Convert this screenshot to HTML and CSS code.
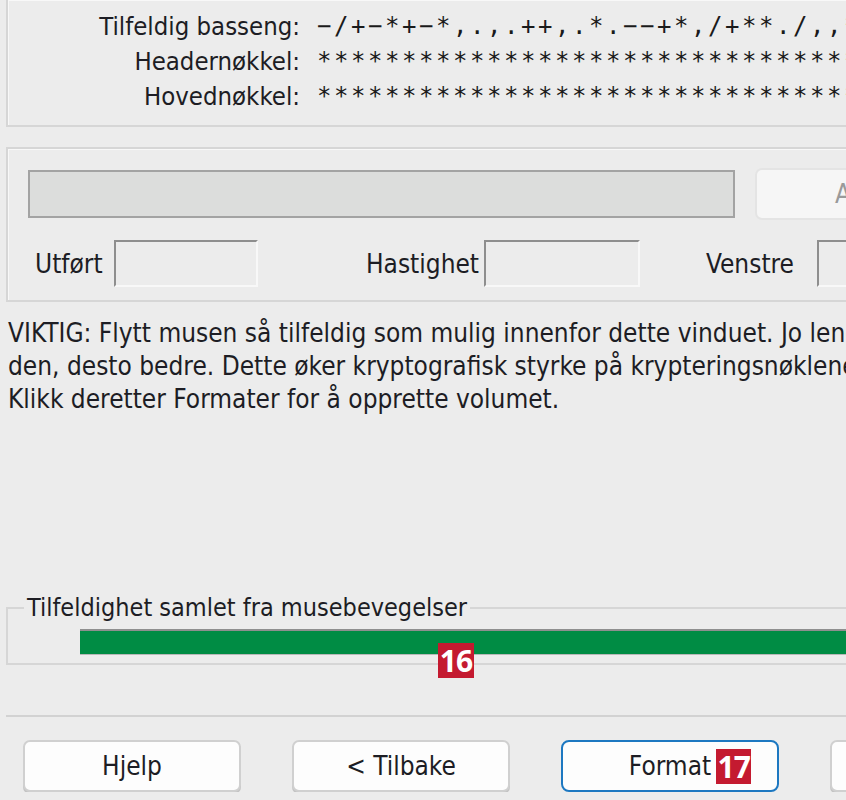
FILE: index.html
```html
<!DOCTYPE html>
<html lang="no">
<head>
<meta charset="utf-8">
<title>Volumformatering</title>
<link rel="stylesheet" href="styles.css">
</head>
<body>
<div class="page">
  <section class="panel keys">
    <div class="key-grid">
      <span class="lbl">Tilfeldig basseng:</span><span class="mono">−/+−*+−*,.,.++,.*.−−+*,/+**./,,*+.−</span>
      <span class="lbl">Headernøkkel:</span><span class="mono">****************************************</span>
      <span class="lbl">Hovednøkkel:</span><span class="mono">****************************************</span>
    </div>
  </section>

  <section class="panel progress">
    <div class="prog-row">
      <div class="prog-bar"></div>
      <div class="btn btn-disabled">Avbryt</div>
    </div>
    <div class="stat-row">
      <div class="stat s1"><span class="stat-lbl">Utført</span><span class="field"></span></div>
      <div class="stat s2"><span class="stat-lbl">Hastighet</span><span class="field"></span></div>
      <div class="stat s3"><span class="stat-lbl">Venstre</span><span class="field"></span></div>
    </div>
  </section>

  <p class="info">
    <span class="line">VIKTIG: Flytt musen så tilfeldig som mulig innenfor dette vinduet. Jo lengre du flytter</span>
    <span class="line">den, desto bedre. Dette øker kryptografisk styrke på krypteringsnøklene.</span>
    <span class="line">Klikk deretter Formater for å opprette volumet.</span>
  </p>

  <fieldset class="group">
    <legend>Tilfeldighet samlet fra musebevegelser</legend>
    <div class="entropy">
      <span class="badge badge-16">16</span>
    </div>
  </fieldset>

  <hr class="sep">

  <div class="buttons">
    <div class="btn">Hjelp</div>
    <div class="btn">&lt; Tilbake</div>
    <div class="btn btn-default">Format<span class="badge badge-17">17</span></div>
    <div class="btn">Avbryt</div>
  </div>
</div>
</body>
</html>
```
FILE: styles.css
```css
html, body {
  margin: 0;
  padding: 0;
  overflow: hidden;
  background: #ececec;
}
body {
  font-family: "DejaVu Sans Condensed", "DejaVu Sans", sans-serif;
  font-stretch: condensed;
  font-size: 26px;
  color: #1d1d24;
}
.page {
  width: 1100px;
  padding-left: 6px;
}
.panel {
  border: 2px solid #d6d6d6;
  box-shadow: inset 1px 1px 0 #f8f8f8;
}
.keys {
  border-top: 0;
  padding: 8px 0 12px;
}
.key-grid {
  display: grid;
  grid-template-columns: 292px auto;
  column-gap: 17px;
  grid-auto-rows: 35px;
  align-items: center;
}
.lbl {
  text-align: right;
  white-space: nowrap;
  font-size: 25.5px;
}
.mono {
  font-family: "DejaVu Sans Mono", monospace;
  font-size: 24px;
  letter-spacing: 2.55px;
  white-space: nowrap;
  color: #1a1a1a;
}
.progress {
  margin-top: 20px;
  padding: 19px 0 13px 20px;
}
.prog-row {
  display: flex;
  align-items: center;
  gap: 20px;
  height: 52px;
}
.prog-bar {
  width: 703px;
  height: 44px;
  background: #dcdddc;
  border: 2px solid #a3a3a3;
}
.btn {
  width: 218px;
  height: 52px;
  box-sizing: border-box;
  border: 2px solid #d0d0d0;
  border-radius: 7px;
  background: #fdfdfd;
  display: flex;
  align-items: center;
  justify-content: center;
  white-space: nowrap;
  box-shadow: 0 2px 0 #c4c4c4;
}
.btn-disabled {
  width: 236px;
  background: #f6f6f6;
  border-color: #e4e4e4;
  box-shadow: none;
  color: #9a9a9a;
}
.stat-row {
  display: flex;
  margin-top: 20px;
  height: 47px;
  align-items: center;
  padding-left: 7px;
}
.stat {
  display: flex;
  align-items: center;
  justify-content: space-between;
}
.s1 { width: 223px; }
.s2 { width: 274px; margin-left: 108px; }
.s3 { width: 311px; margin-left: 66px; }
.field {
  width: 140px;
  height: 43px;
  border: 2px solid;
  border-color: #8e8e8e #f8f8f8 #f8f8f8 #8e8e8e;
  background: #ececec;
}
.s2 .field { width: 152px; }
.s3 .field { width: 196px; }
.info {
  margin: 15px 0 0 2px;
  line-height: 33px;
}
.line {
  display: block;
  white-space: nowrap;
}
.group {
  margin: 179px 0 0 0;
  border: 2px solid #d6d6d6;
  padding: 8px 0 8px 0;
}
.group legend {
  padding: 0 3px;
  margin-left: 16px;
  line-height: 26px;
  font-size: 25px;
}
.entropy {
  position: relative;
  margin-left: 72px;
  height: 23px;
  border-top: 2px solid #8f8f8f;
  border-bottom: 1px solid #b8b8b8;
  background: #008c44;
}
.badge {
  background: #c41a30;
  color: #fff;
  font-family: "Open Sans", Roboto, sans-serif;
  font-weight: 700;
  font-size: 30px;
  font-stretch: normal;
  display: inline-flex;
  align-items: center;
  justify-content: center;
  letter-spacing: -1px;
}
.badge-16 {
  position: absolute;
  left: 358px;
  top: 12px;
  width: 36px;
  height: 35px;
}
.badge-17 {
  width: 35px;
  height: 35px;
  margin-left: 5px;
  margin-right: -40px;
  align-self: flex-end;
  margin-bottom: 6px;
}
.sep {
  margin: 50px 0 0 0;
  border: 0;
  border-top: 2px solid #d2d2d2;
  height: 0;
}
.buttons {
  display: flex;
  gap: 51px;
  margin-top: 23px;
  padding-left: 17px;
}
.btn-default {
  border-color: #1d78c1;
  border-radius: 8px;
  box-shadow: none;
}
```
